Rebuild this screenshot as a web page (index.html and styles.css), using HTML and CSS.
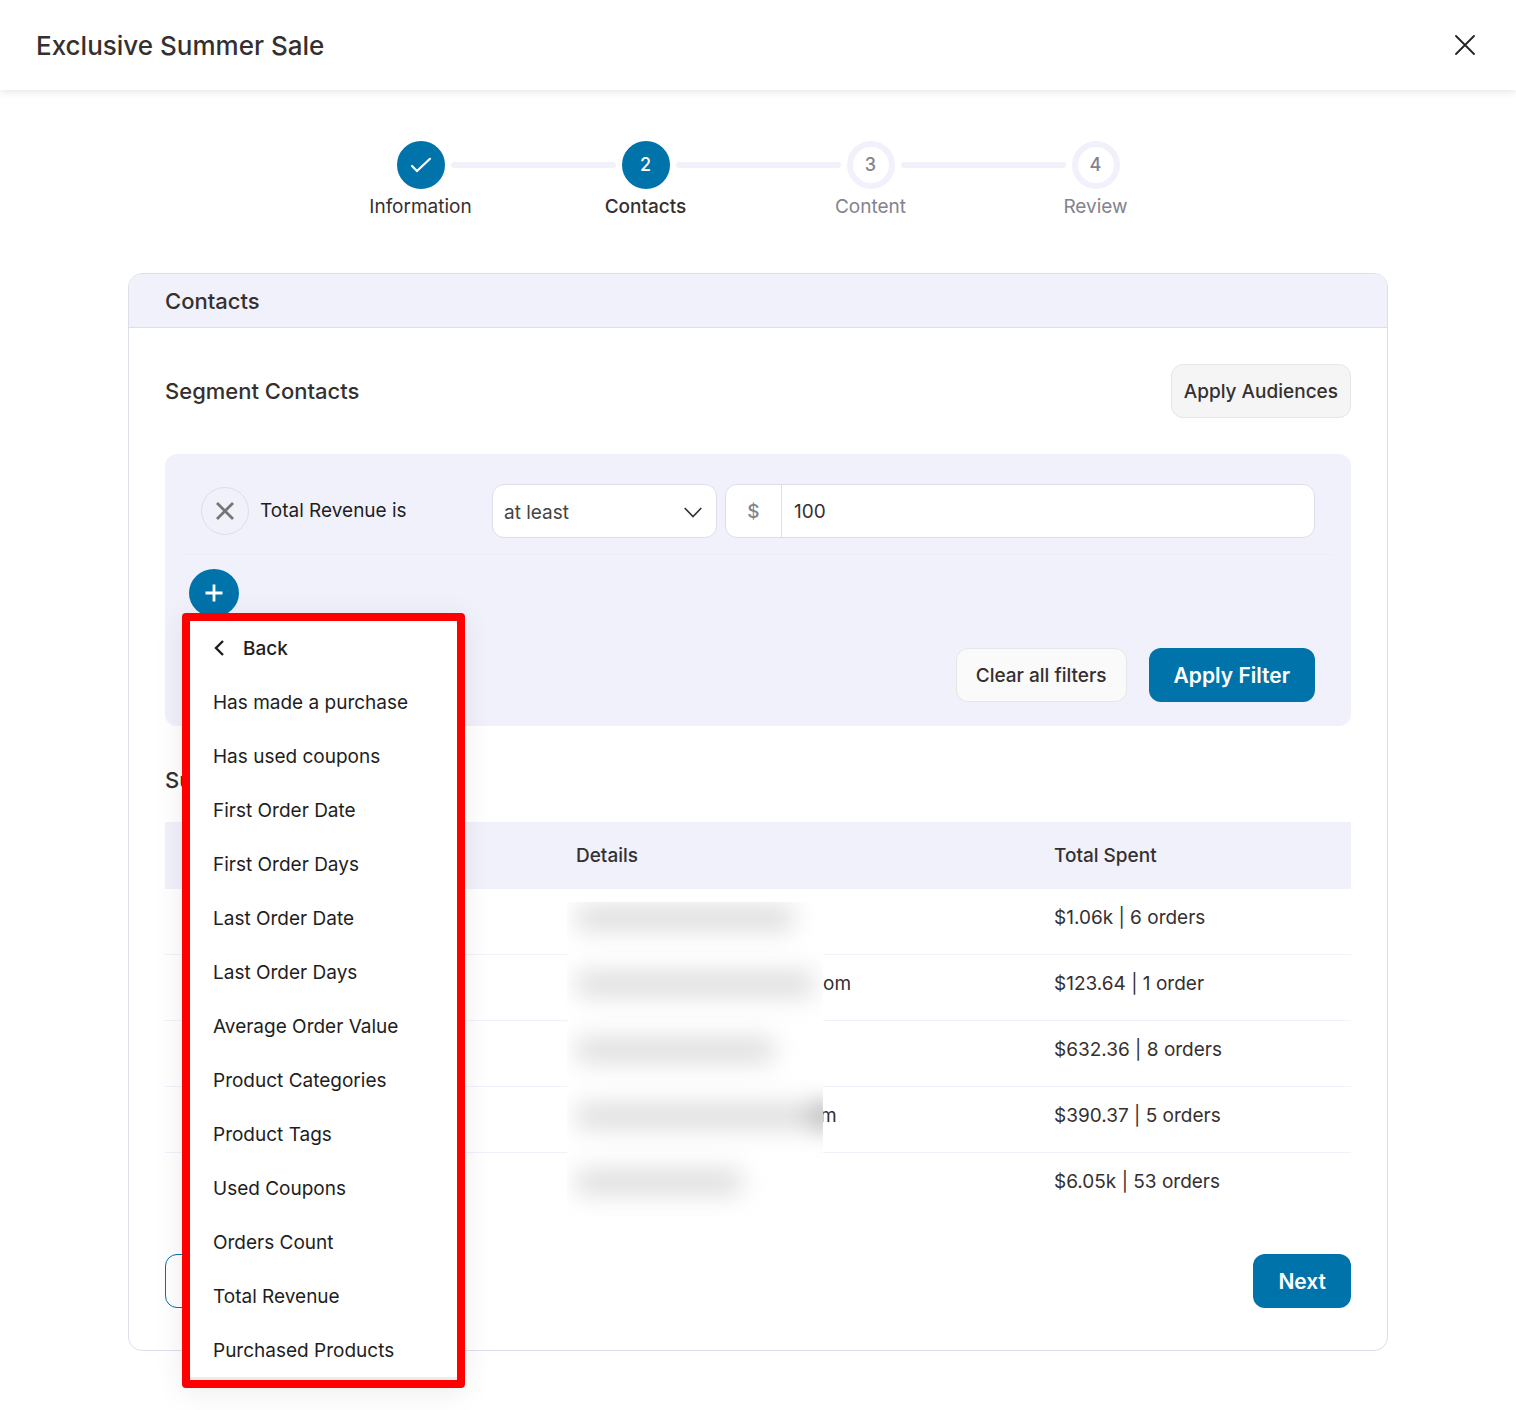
FILE: index.html
```html
<!DOCTYPE html>
<html lang="en">
<head>
<meta charset="utf-8">
<meta name="viewport" content="width=device-width, initial-scale=1">
<title>Exclusive Summer Sale</title>
<link rel="stylesheet" href="styles.css">
</head>
<body>
<header class="topbar">
  <h1 class="topbar-title">Exclusive Summer Sale</h1>
  <button class="topbar-close" type="button" aria-label="Close">
    <svg width="20" height="20" viewBox="0 0 20 20" fill="none" stroke="currentColor" stroke-width="1.8" stroke-linecap="round"><path d="M1 1l18 18M19 1L1 19"/></svg>
  </button>
</header>

<main class="page">
  <ol class="steps">
    <li class="step step-done">
      <span class="step-dot"><svg width="22" height="18" viewBox="0 0 22 18" fill="none" stroke="currentColor" stroke-width="2.200" stroke-linecap="round"><path d="M2 10l5 5L20 2.800"/></svg></span>
      <span class="step-label">Information</span>
    </li>
    <li class="step step-current">
      <span class="step-dot">2</span>
      <span class="step-label">Contacts</span>
    </li>
    <li class="step">
      <span class="step-dot">3</span>
      <span class="step-label">Content</span>
    </li>
    <li class="step">
      <span class="step-dot">4</span>
      <span class="step-label">Review</span>
    </li>
  </ol>

  <section class="card">
    <h2 class="card-header">Contacts</h2>
    <div class="card-body">
      <div class="segment-head">
        <h3 class="section-title">Segment Contacts</h3>
        <button class="btn btn-light" type="button">Apply Audiences</button>
      </div>

      <div class="filters">
        <div class="filter-row">
          <div class="filter-name">
            <button class="filter-remove" type="button" aria-label="Remove filter">
              <svg width="18" height="18" viewBox="0 0 18 18" fill="none" stroke="currentColor" stroke-width="2.800"><path d="M1 1l16 16M17 1L1 17"/></svg>
            </button>
            <label for="amount">Total Revenue is</label>
          </div>
          <div class="select-wrap">
            <select class="select" aria-label="Condition"><option>at least</option></select>
            <svg class="select-arrow" width="18" height="11" viewBox="0 0 18 11" fill="none" stroke="currentColor" stroke-width="1.600"><path d="M.7 1L9 9.500 17.300 1"/></svg>
          </div>
          <div class="money">
            <span class="money-sign">$</span>
            <input class="money-input" id="amount" type="text" value="100">
          </div>
        </div>

        <div class="add-filter">
          <button class="add-button" type="button" aria-label="Add filter">
            <svg width="18" height="18" viewBox="0 0 18 18" fill="none" stroke="currentColor" stroke-width="2.800"><path d="M9 .5v17M.5 9h17"/></svg>
          </button>
          <div class="menu">
            <button class="menu-item menu-back" type="button">
              <svg width="12" height="18" viewBox="0 0 12 18" fill="none" stroke="currentColor" stroke-width="2.400"><path d="M10 1L3 8l7 7"/></svg>
              Back
            </button>
            <button class="menu-item" type="button">Has made a purchase</button>
            <button class="menu-item" type="button">Has used coupons</button>
            <button class="menu-item" type="button">First Order Date</button>
            <button class="menu-item" type="button">First Order Days</button>
            <button class="menu-item" type="button">Last Order Date</button>
            <button class="menu-item" type="button">Last Order Days</button>
            <button class="menu-item" type="button">Average Order Value</button>
            <button class="menu-item" type="button">Product Categories</button>
            <button class="menu-item" type="button">Product Tags</button>
            <button class="menu-item" type="button">Used Coupons</button>
            <button class="menu-item" type="button">Orders Count</button>
            <button class="menu-item" type="button">Total Revenue</button>
            <button class="menu-item" type="button">Purchased Products</button>
          </div>
        </div>

        <div class="filter-actions">
          <button class="btn btn-pale" type="button">Clear all filters</button>
          <button class="btn btn-primary" type="button">Apply Filter</button>
        </div>
      </div>

      <h3 class="section-title list-title">Su</h3>
      <div class="list">
        <table class="contacts">
          <thead>
            <tr><th class="col-contact"></th><th class="col-details">Details</th><th>Total Spent</th></tr>
          </thead>
          <tbody>
            <tr><td></td><td></td><td>$1.06k | 6 orders</td></tr>
            <tr><td></td><td><span class="masked" style="width:247px"></span>om</td><td>$123.64 | 1 order</td></tr>
            <tr><td></td><td></td><td>$632.36 | 8 orders</td></tr>
            <tr><td></td><td><span class="masked" style="width:244px"></span>m</td><td>$390.37 | 5 orders</td></tr>
            <tr><td></td><td></td><td>$6.05k | 53 orders</td></tr>
          </tbody>
        </table>
        <div class="redaction" aria-hidden="true">
          <span class="smudge" style="width:218px"></span>
          <span class="smudge" style="width:238px"></span>
          <span class="smudge" style="width:198px"></span>
          <span class="smudge smudge-dark-end" style="width:260px"></span>
          <span class="smudge" style="width:166px"></span>
        </div>
      </div>

      <div class="card-actions">
        <button class="btn btn-outline" type="button" aria-label="Back"></button>
        <button class="btn btn-primary" type="button">Next</button>
      </div>
    </div>
  </section>
</main>
</body>
</html>
```

FILE: styles.css
```css
* {
  box-sizing: border-box;
}

body {
  margin: 0;
  background: #fff;
  color: #353030;
  font-family: Inter, "Liberation Sans", sans-serif;
  font-size: 19px;
  line-height: 30px;
}

h1,
h2,
h3 {
  margin: 0;
  font-weight: 500;
}

button,
input,
select {
  margin: 0;
  padding: 0;
  border: 0;
  background: none;
  color: inherit;
  font: inherit;
}

svg {
  display: block;
}

.topbar {
  display: flex;
  align-items: center;
  justify-content: space-between;
  height: 90px;
  padding: 0 36px;
  box-shadow: 0 2px 8px rgba(0, 0, 0, 0.1);
}

.topbar-title {
  padding-top: 2px;
  font-size: 26px;
}

.topbar-close {
  padding: 5px;
  color: #222;
}

.page {
  padding: 51px 36px 59px;
}

/* Progress steps */
.steps {
  display: grid;
  grid-template-columns: repeat(4, 225px);
  justify-content: center;
  margin: 0 0 51px;
  padding: 0;
  list-style: none;
}

.step {
  position: relative;
  display: flex;
  flex-direction: column;
  align-items: center;
  gap: 3px;
  color: #82838e;
}

.step + .step::before {
  content: "";
  position: absolute;
  top: 21px;
  right: 50%;
  width: 165px;
  height: 6px;
  margin-right: 30px;
  border-radius: 3px;
  background: #f1f1fb;
}

.step-dot {
  display: flex;
  align-items: center;
  justify-content: center;
  width: 48px;
  height: 48px;
  border: 6px solid #f1f1fb;
  border-radius: 50%;
  font-size: 18px;
  font-weight: 500;
}

.step-done,
.step-current {
  color: #353030;
}

.step-done .step-dot,
.step-current .step-dot {
  border-color: #0073aa;
  background: #0073aa;
  color: #fff;
}

.step-current .step-label {
  font-weight: 500;
}

/* Card */
.card {
  max-width: 1260px;
  margin: 0 auto;
  border: 1px solid #dedeea;
  border-radius: 14px;
}

.card-header {
  padding: 12px 36px 11px;
  border-bottom: 1px solid #dedeea;
  border-radius: 13px 13px 0 0;
  background: #f1f1fb;
  font-size: 22px;
}

.card-body {
  padding: 36px 36px 42px;
}

.section-title {
  font-size: 22px;
}

.segment-head {
  display: flex;
  align-items: center;
  justify-content: space-between;
  margin-bottom: 36px;
}

.btn {
  height: 54px;
  border: 1px solid transparent;
  border-radius: 12px;
  font-weight: 500;
}

.btn-light {
  padding: 2px 12px 0;
  border-color: #e6e6e6;
  background: #f5f5f5;
}

.btn-pale {
  padding: 2px 19px 0;
  border-color: #e6e6e6;
  background: #fafafa;
}

.btn-primary {
  padding: 2px 24px 0;
  background: #0073aa;
  color: #fff;
  font-size: 21px;
  font-weight: 600;
}

.btn-outline {
  width: 97px;
  border-color: #0073aa;
  background: #fff;
}

/* Filters */
.filters {
  padding: 30px 36px 24px;
  border-radius: 12px;
  background: #f1f1fb;
}

.filter-row {
  display: grid;
  grid-template-columns: 283px 225px 1fr;
  gap: 8px;
  align-items: center;
  margin: 0 -18px 14px;
  padding: 0 18px 16px;
  border-bottom: 1px solid #eeeef2;
}

.filter-name {
  display: flex;
  align-items: center;
  gap: 11px;
  color: #1e1e1e;
}

.filter-remove {
  display: flex;
  align-items: center;
  justify-content: center;
  width: 48px;
  height: 48px;
  border: 1px solid #dedeea;
  border-radius: 50%;
  color: #757575;
}

.select-wrap {
  position: relative;
}

.select {
  display: block;
  width: 100%;
  height: 54px;
  padding: 3px 11px 0;
  border: 1px solid #dedeea;
  border-radius: 12px;
  appearance: none;
  background: #fff;
  color: #444;
}

.select-arrow {
  position: absolute;
  top: 23px;
  right: 15px;
  color: #353030;
  pointer-events: none;
}

.money {
  display: flex;
  height: 54px;
  overflow: hidden;
  border: 1px solid #dedeea;
  border-radius: 12px;
  background: #fff;
}

.money-sign {
  display: flex;
  align-items: center;
  justify-content: center;
  width: 56px;
  padding-top: 2px;
  border-right: 1px solid #dedeea;
  color: #82838e;
  font-weight: 500;
}

.money-input {
  flex: 1;
  min-width: 0;
  padding: 2px 12px 0;
}

.add-filter {
  position: relative;
  margin: 0 -12px 31px;
}

.add-button {
  display: flex;
  align-items: center;
  justify-content: center;
  width: 50px;
  height: 48px;
  border-radius: 50%;
  background: #0073aa;
  color: #fff;
}

.menu {
  position: absolute;
  z-index: 2;
  top: 44px;
  left: -7px;
  width: 283px;
  padding-bottom: 3px;
  border: 8px solid #f00;
  border-radius: 4px;
  background: #ececec;
  box-shadow: 0 4px 30px rgba(0, 0, 0, 0.08);
}

.menu-item {
  display: flex;
  align-items: center;
  width: 100%;
  height: 54px;
  padding: 2px 23px 0;
  background: #fff;
  color: #1e1e1e;
  text-align: left;
}

.menu-back {
  gap: 18px;
  font-weight: 500;
}

.filter-actions {
  display: flex;
  justify-content: flex-end;
  gap: 22px;
}

/* Contact list */
.list-title {
  margin: 39px 0 27px;
}

.list {
  position: relative;
}

.contacts {
  width: 100%;
  border-collapse: separate;
  border-spacing: 0;
  table-layout: fixed;
}

.contacts th {
  height: 67px;
  padding: 0 12px;
  background: #f1f1fb;
  font-weight: 500;
  text-align: left;
}

.contacts td {
  height: 66px;
  padding: 14px 12px 21px;
  border-bottom: 1px solid #f1f1fb;
  vertical-align: top;
}

.contacts tr:last-child td {
  border-bottom: 0;
}

.contacts .col-contact {
  width: 399px;
}

.contacts .col-details {
  width: 478px;
}

.masked {
  display: inline-block;
}

.redaction {
  position: absolute;
  top: 80px;
  left: 402px;
  display: grid;
  grid-auto-rows: 66px;
  width: 256px;
  height: 316px;
  overflow: hidden;
  background: #fff;
}

.smudge {
  height: 26px;
  margin: 3px 0 0 9px;
  border-radius: 8px;
  background: #dedede;
  filter: blur(12px);
}

.smudge-dark-end {
  background: linear-gradient(to right, #dedede 88%, #888);
}

.card-actions {
  display: flex;
  justify-content: space-between;
  margin-top: 35px;
}
```
